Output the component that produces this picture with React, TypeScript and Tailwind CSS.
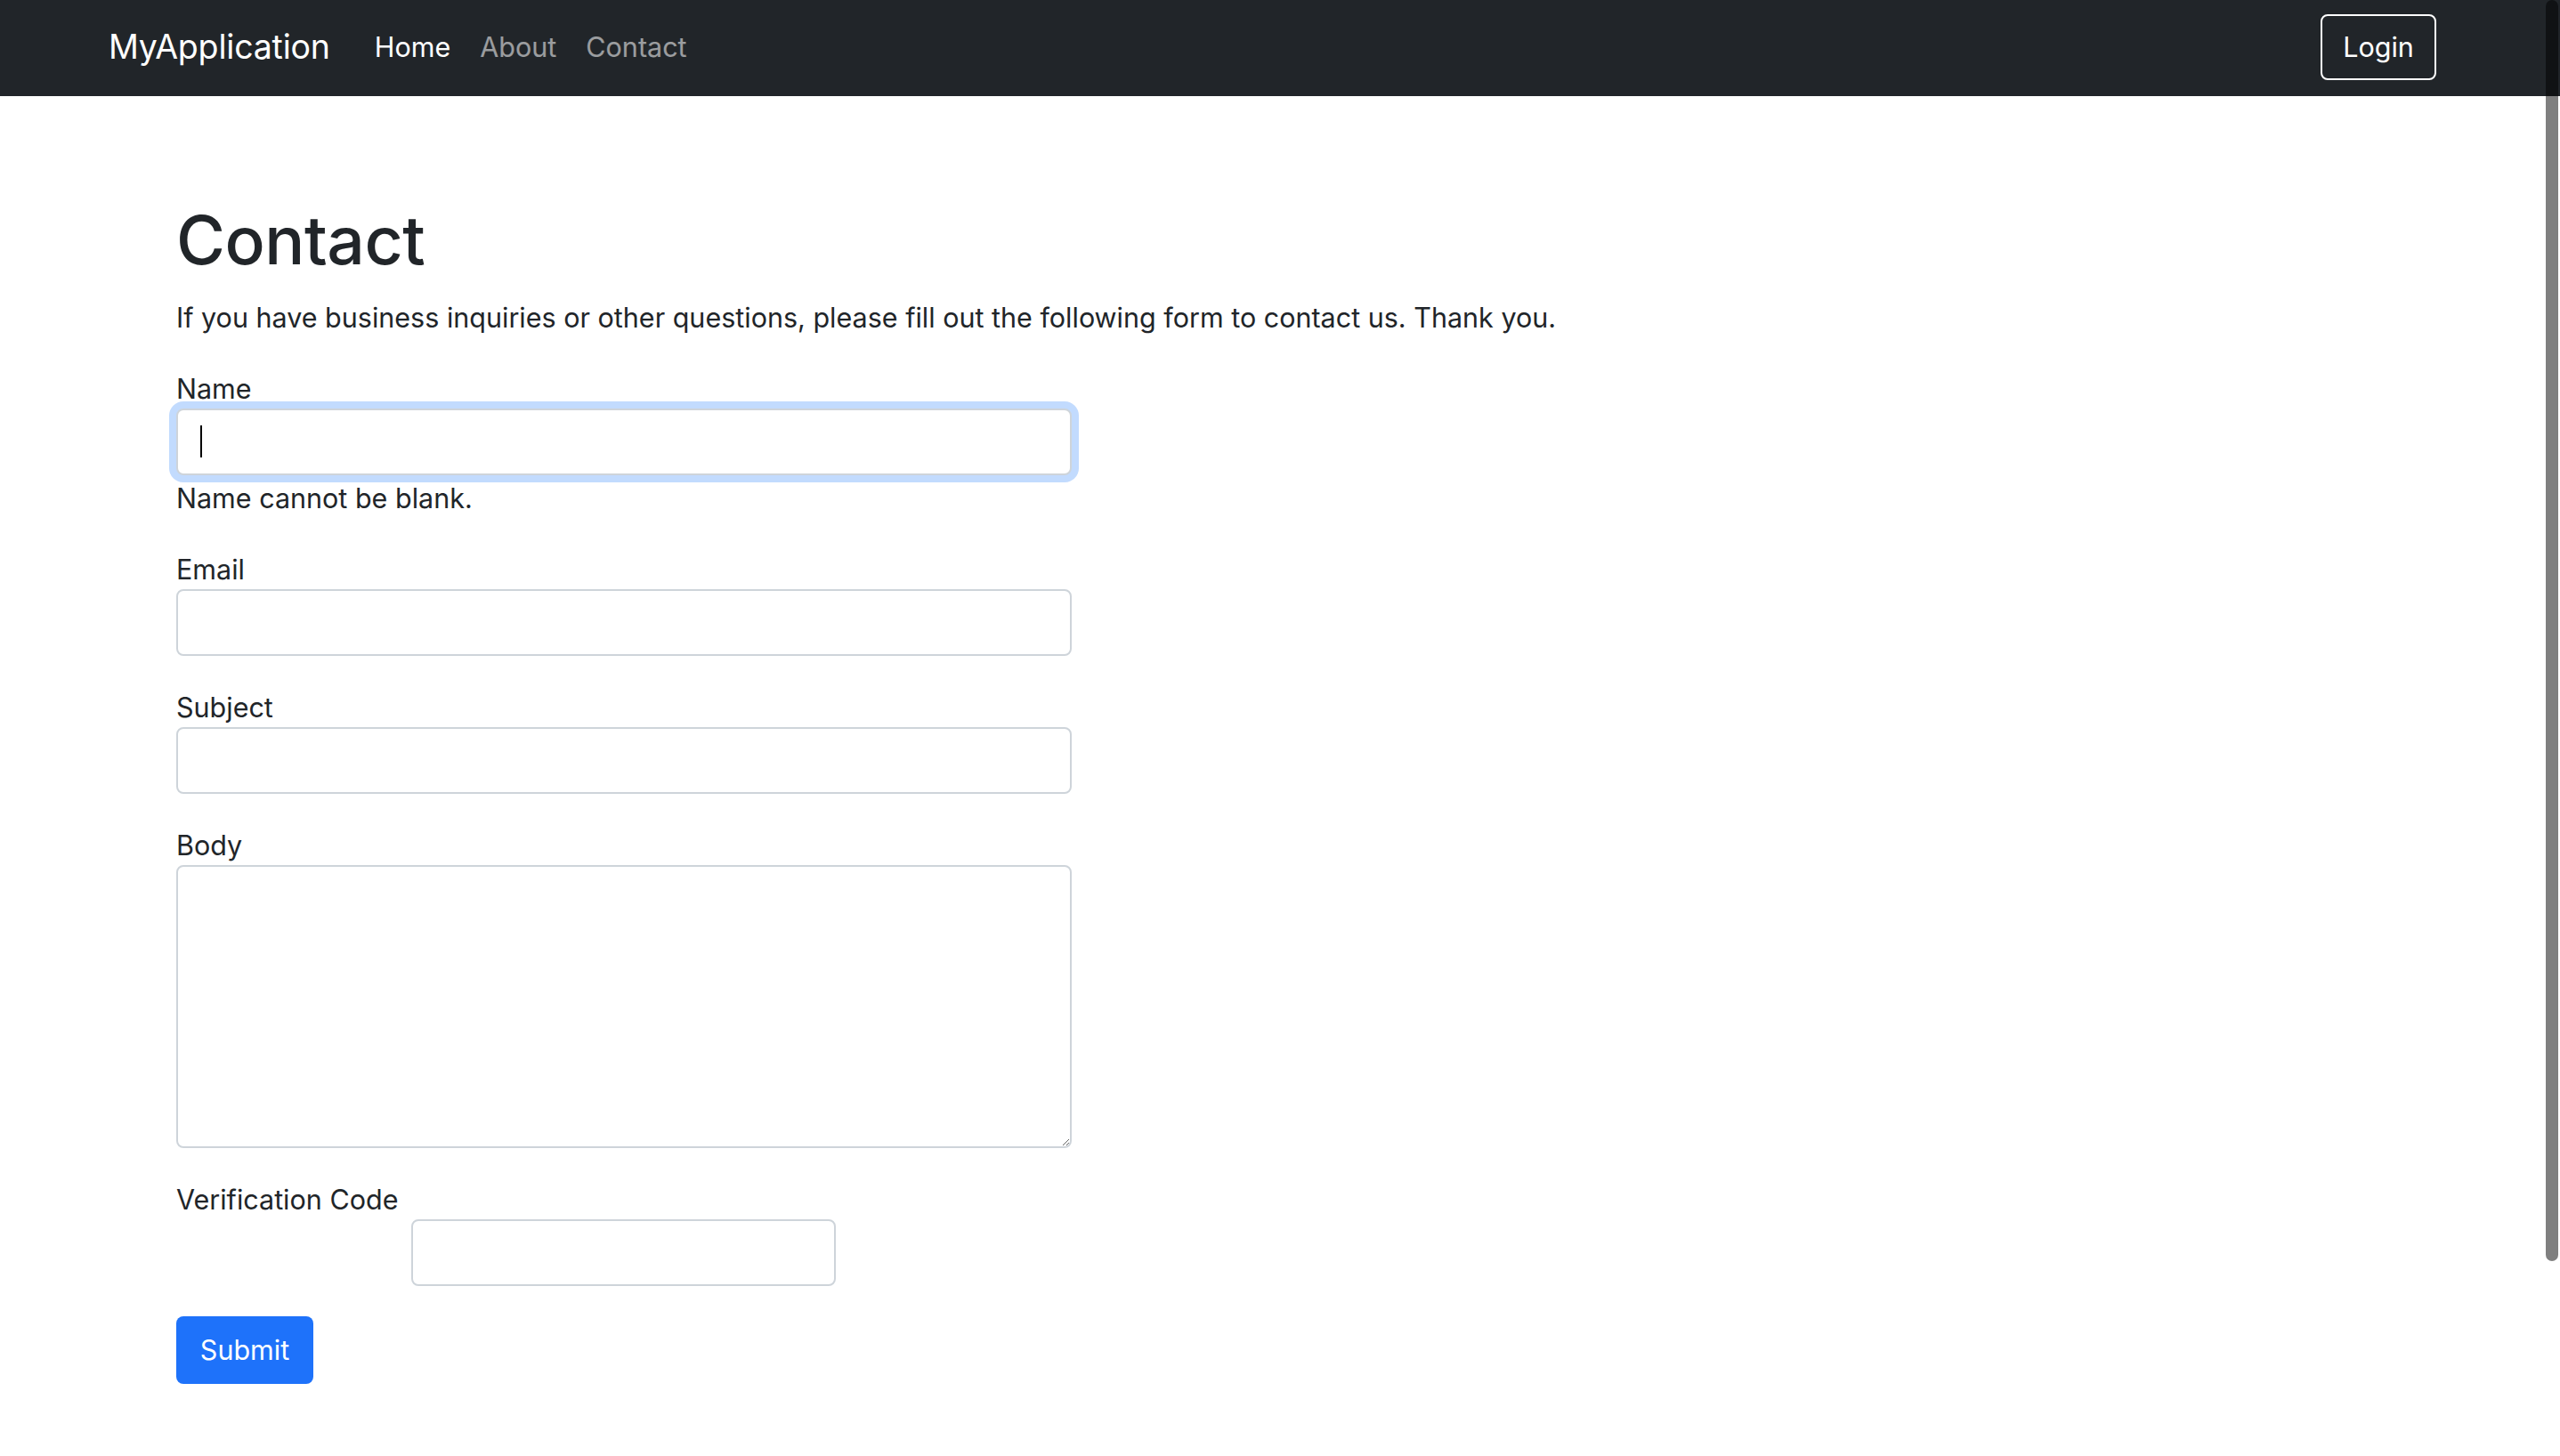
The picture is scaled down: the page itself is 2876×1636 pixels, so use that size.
import React from 'react';

const navLinks = [
  { label: 'Home', active: true },
  { label: 'About', active: false },
  { label: 'Contact', active: false },
];

function Field({ label, children }: { label: string; children: React.ReactNode }) {
  return (
    <div className="mt-[35px]">
      <label className="block text-[30.5px] leading-[45px] text-[#212529]">{label}</label>
      {children}
    </div>
  );
}

const inputBase =
  'block h-[75px] rounded-[8px] border-2 border-[#ced4da] bg-white px-[24px] text-[30.5px] text-[#212529] outline-none';

export default function App() {
  return (
    <div className="relative min-h-screen bg-white font-['Inter','Noto_Sans',sans-serif] text-[#212529]">
      {/* Navbar */}
      <nav className="flex h-[108px] items-center justify-between bg-[#212529] pb-[2px] pl-[122px] pr-[139px]">
        <div className="flex items-center">
          <a className="text-[37.5px] leading-none tracking-[-0.2px] text-white">MyApplication</a>
          <ul className="ml-[50px] flex items-center gap-[33px]">
            {navLinks.map((l) => (
              <li
                key={l.label}
                className={l.active ? 'text-[30.5px] text-white' : 'text-[30.5px] text-white/55'}
              >
                {l.label}
              </li>
            ))}
          </ul>
        </div>
        <button className="flex h-[74px] w-[130px] items-center justify-center rounded-[8px] border-2 border-white text-[30.5px] text-white">
          Login
        </button>
      </nav>

      {/* Content */}
      <main className="pl-[198px] pt-[114px]">
        <h1 className="text-[75px] font-medium leading-[96px] tracking-[-0.5px]">Contact</h1>
        <p className="mt-[16px] text-[30.5px] leading-[45px]">
          If you have business inquiries or other questions, please fill out the following form to contact us. Thank you.
        </p>

        <form className="pb-[80px]" onSubmit={(e) => e.preventDefault()}>
          <Field label="Name">
            <div className="relative w-[1006px]">
              <input
                className={inputBase + ' w-[1006px] border-[#86b7fe] caret-transparent ring-[8px] ring-[#0d6efd]/25'}
                aria-invalid="true"
              />
              <span className="absolute left-[27px] top-[19px] h-[36px] w-[2px] bg-black" />
            </div>
            <div className="mt-[3px] text-[30.5px] leading-[45px]">Name cannot be blank.</div>
          </Field>

          <Field label="Email">
            <input className={inputBase + ' w-[1006px]'} />
          </Field>

          <Field label="Subject">
            <input className={inputBase + ' w-[1006px]'} />
          </Field>

          <Field label="Body">
            <textarea className="block h-[318px] w-[1006px] rounded-[8px] border-2 border-[#ced4da] bg-white px-[24px] py-[12px] text-[30.5px] outline-none" />
          </Field>

          <Field label="Verification Code">
            <div className="flex">
              <div className="w-[264px] shrink-0" />
              <input className={inputBase + ' w-[477px]'} />
            </div>
          </Field>

          <button
            type="submit"
            className="mt-[34px] flex h-[76px] w-[154px] items-center justify-center rounded-[8px] bg-[#1e72fa] text-[30.5px] text-white"
          >
            Submit
          </button>
        </form>
      </main>

      {/* overlay scrollbar thumb */}
      <div className="absolute right-[2px] top-0 h-[1417px] w-[14px] rounded-full bg-black/50" />
    </div>
  );
}
